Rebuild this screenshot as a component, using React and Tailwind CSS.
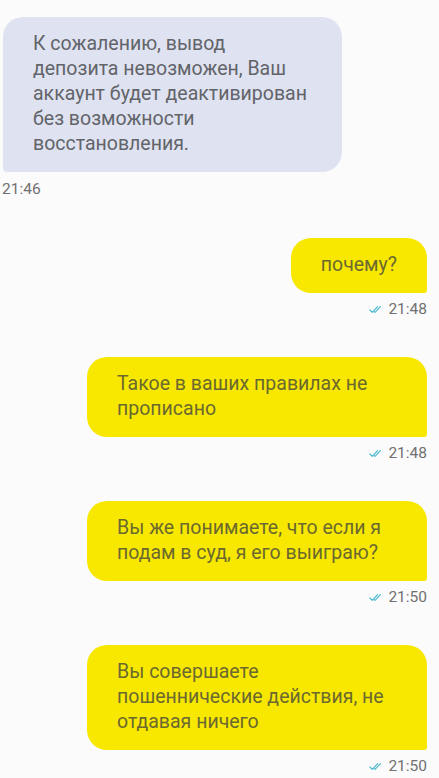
const messages = [
  { id: 1, out: false, text: 'К сожалению, вывод депозита невозможен, Ваш аккаунт будет деактивирован без возможности восстановления.', time: '21:46' },
  { id: 2, out: true, text: 'почему?', time: '21:48' },
  { id: 3, out: true, text: 'Такое в ваших правилах не прописано', time: '21:48' },
  { id: 4, out: true, text: 'Вы же понимаете, что если я подам в суд, я его выиграю?', time: '21:50' },
  { id: 5, out: true, text: 'Вы совершаете пошеннические действия, не отдавая ничего', time: '21:50' },
];

const DoubleCheck = () => (
  <svg width="14" height="9" viewBox="0 0 14 9" fill="none" stroke="#4dbad0" strokeWidth="1.2" strokeLinecap="round" strokeLinejoin="round">
    <path d="M1 5 L3.2 7.4 L8.6 1.6" />
    <path d="M5.2 6.6 L6 7.4 L11.4 1.6" />
  </svg>
);

const Message = ({ msg }) => {
  if (!msg.out) {
    return (
      <div className="mb-[1px] flex flex-col items-start">
        <div className="max-w-[339px] rounded-[20px] rounded-bl-[4px] bg-[#dfe2f1] px-[30px] pt-[14px] pb-[16px] text-[19.5px] leading-[25px] text-[#626469]">
          {msg.text}
        </div>
        <div className="mt-[8px] -ml-[1px] text-[15.5px] leading-[18px] text-[#707070]">{msg.time}</div>
      </div>
    );
  }
  return (
    <div className="flex flex-col items-end">
      <div className="max-w-[340px] rounded-[20px] rounded-br-[3px] bg-[#f8e800] px-[30px] pt-[14px] pb-[16px] text-[19.5px] leading-[25px] text-[#6b692f]">
        {msg.text}
      </div>
      <div className="mt-[7px] flex items-center gap-[5px] text-[15.5px] leading-[18px] text-[#707070]">
        <DoubleCheck />
        <span>{msg.time}</span>
      </div>
    </div>
  );
};

const App = () => {
  return (
    <div className="min-h-[778px] bg-[#fbfbfb] pl-[3px] pr-[12px] pt-[17px] pb-[6px] font-['Roboto',sans-serif]">
      <div className="flex flex-col gap-[39px]">
        {messages.map(m => (
          <Message key={m.id} msg={m} />
        ))}
      </div>
    </div>
  );
};

export default App;
